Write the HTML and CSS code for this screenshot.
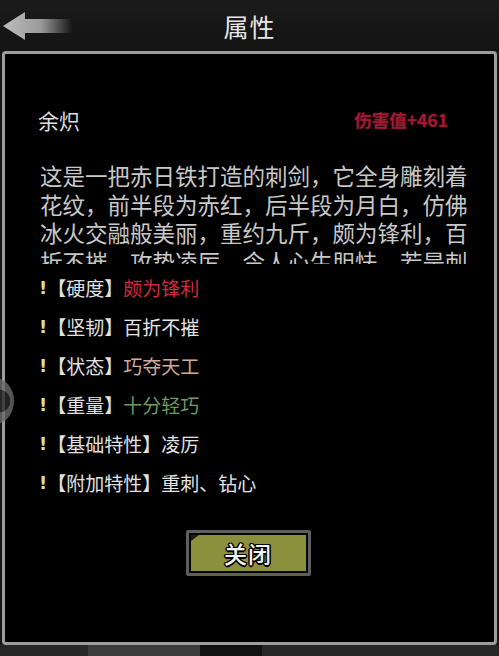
FILE: index.html
```html
<!DOCTYPE html>
<html lang="zh">
<head>
<meta charset="utf-8">
<title>属性</title>
<link rel="stylesheet" href="styles.css">
</head>
<body>
<div class="page">
  <header class="topbar">
    <div class="back">
      <svg width="70" height="30" viewBox="0 0 70 30">
        <defs>
          <linearGradient id="ag" x1="0" y1="0" x2="1" y2="0">
            <stop offset="0" stop-color="#bdbdbd"/>
            <stop offset="0.55" stop-color="#9a9a9a"/>
            <stop offset="1" stop-color="#9a9a9a" stop-opacity="0"/>
          </linearGradient>
        </defs>
        <polygon points="1,15 23,1 23,8 70,8 70,22 23,22 23,29" fill="url(#ag)"/>
      </svg>
    </div>
    <h1 class="title">属性</h1>
    <div class="spacer"></div>
  </header>

  <section class="panel">
    <div class="item-head">
      <span class="item-name">余炽</span>
      <span class="item-dmg">伤害值+461</span>
    </div>
    <div class="desc-clip">
      <p class="desc">这是一把赤日铁打造的刺剑，它全身雕刻着花纹，前半段为赤红，后半段为月白，仿佛冰火交融般美丽，重约九斤，颇为锋利，百折不摧，攻势凌厉，令人心生胆怯，若是刺</p>
    </div>
    <ul class="attrs">
      <li><span class="mark">!</span><span class="key">【硬度】</span><span class="v-red">颇为锋利</span></li>
      <li><span class="mark">!</span><span class="key">【坚韧】</span><span class="v-white">百折不摧</span></li>
      <li><span class="mark">!</span><span class="key">【状态】</span><span class="v-tan">巧夺天工</span></li>
      <li><span class="mark">!</span><span class="key">【重量】</span><span class="v-green">十分轻巧</span></li>
      <li><span class="mark">!</span><span class="key">【基础特性】</span><span class="v-white">凌厉</span></li>
      <li><span class="mark">!</span><span class="key">【附加特性】</span><span class="v-white">重刺、钻心</span></li>
    </ul>
    <div class="actions">
      <button class="close-btn"><span class="close-inner">关闭</span></button>
    </div>
  </section>

  <div class="bottom-strip"></div>
  <div class="edge-knob"></div>
</div>
</body>
</html>
```

FILE: styles.css
```css
* {
  box-sizing: border-box;
}

html, body {
  margin: 0;
  padding: 0;
  background: #161616;
}

body {
  font-family: "Noto Sans CJK SC", "Noto Sans", sans-serif;
}

.page {
  position: relative;
  width: 499px;
  height: 656px;
  display: flex;
  flex-direction: column;
  overflow: hidden;
  background: #171717;
}

.topbar {
  height: 51px;
  flex: none;
  display: grid;
  grid-template-columns: 1fr auto 1fr;
  align-items: center;
  background: linear-gradient(#1b1b1b, #131313);
}

.back {
  padding-left: 2px;
  padding-top: 1px;
  display: flex;
  align-items: center;
}

.back svg {
  display: block;
}

.title {
  margin: 0;
  font-size: 25px;
  font-weight: 400;
  line-height: 30px;
  color: #e6e6e6;
  letter-spacing: 1px;
  padding-top: 1px;
}

.panel {
  flex: 1;
  margin: 0 2px;
  border: 3px solid #9d9d9d;
  border-radius: 4px;
  background: #000;
  padding: 54px 0 0 33px;
  display: flex;
  flex-direction: column;
}

.item-head {
  display: flex;
  justify-content: space-between;
  align-items: center;
  height: 24px;
  padding-right: 46px;
}

.item-name {
  font-size: 21px;
  line-height: 24px;
  color: #dedede;
}

.item-dmg {
  font-size: 17.5px;
  line-height: 24px;
  font-weight: 700;
  color: #a01a33;
  text-shadow: 0 0 2px rgba(200, 30, 60, 0.5);
}

.desc-clip {
  margin: 29px 0 0 2px;
  width: 430px;
  height: 103px;
  overflow: hidden;
}

.desc {
  margin: 0;
  font-size: 22.5px;
  line-height: 28.7px;
  color: #c9c9c9;
}

.attrs {
  list-style: none;
  margin: 4px 0 0 1px;
  padding: 0;
}

.attrs li {
  display: flex;
  align-items: center;
  font-size: 19px;
  line-height: 39px;
  height: 39px;
  color: #e2e2e2;
  white-space: nowrap;
}

.mark {
  color: #d6de98;
  font-weight: 700;
  font-family: "DejaVu Sans", sans-serif;
  font-size: 18px;
}

.v-red { color: #d02a3e; }
.v-white { color: #e4e4e4; }
.v-tan { color: #d4ab98; }
.v-green { color: #6f9b5f; }

.actions {
  display: flex;
  justify-content: center;
  padding-right: 36px;
  margin-top: 28px;
}

.close-btn {
  width: 125px;
  height: 46px;
  padding: 2px;
  border: 3px solid #5e5e5e;
  border-radius: 2px;
  background: #050505;
  cursor: pointer;
  display: flex;
}

.close-inner {
  position: relative;
  flex: 1;
  display: flex;
  align-items: center;
  justify-content: center;
  background: #8b903d;
  font-family: "Noto Sans CJK SC", sans-serif;
  font-size: 23px;
  font-weight: 500;
  color: #f4f4f4;
  letter-spacing: 1px;
  text-shadow:
    -1.5px 0 0 #000, 1.5px 0 0 #000, 0 -1.5px 0 #000, 0 1.5px 0 #000,
    -1px -1px 0 #000, 1px 1px 0 #000, -1px 1px 0 #000, 1px -1px 0 #000;
}

.close-inner::before {
  content: "";
  position: absolute;
  left: 0;
  top: 0;
  border-top: 6px solid #1c1c10;
  border-right: 8px solid transparent;
}

.bottom-strip {
  height: 11px;
  flex: none;
  background:
    linear-gradient(90deg, transparent 0 88px, #3b3b3b 88px 200px, #111 200px 262px, transparent 262px),
    #262626;
}

.edge-knob {
  position: absolute;
  left: -24px;
  top: 378px;
  width: 38px;
  height: 46px;
  border-radius: 50%;
  background: radial-gradient(circle at 60% 50%, #2a2a2a 0 35%, #6a6a6a 36% 70%, #474747 71%);
  opacity: 0.8;
}
```
